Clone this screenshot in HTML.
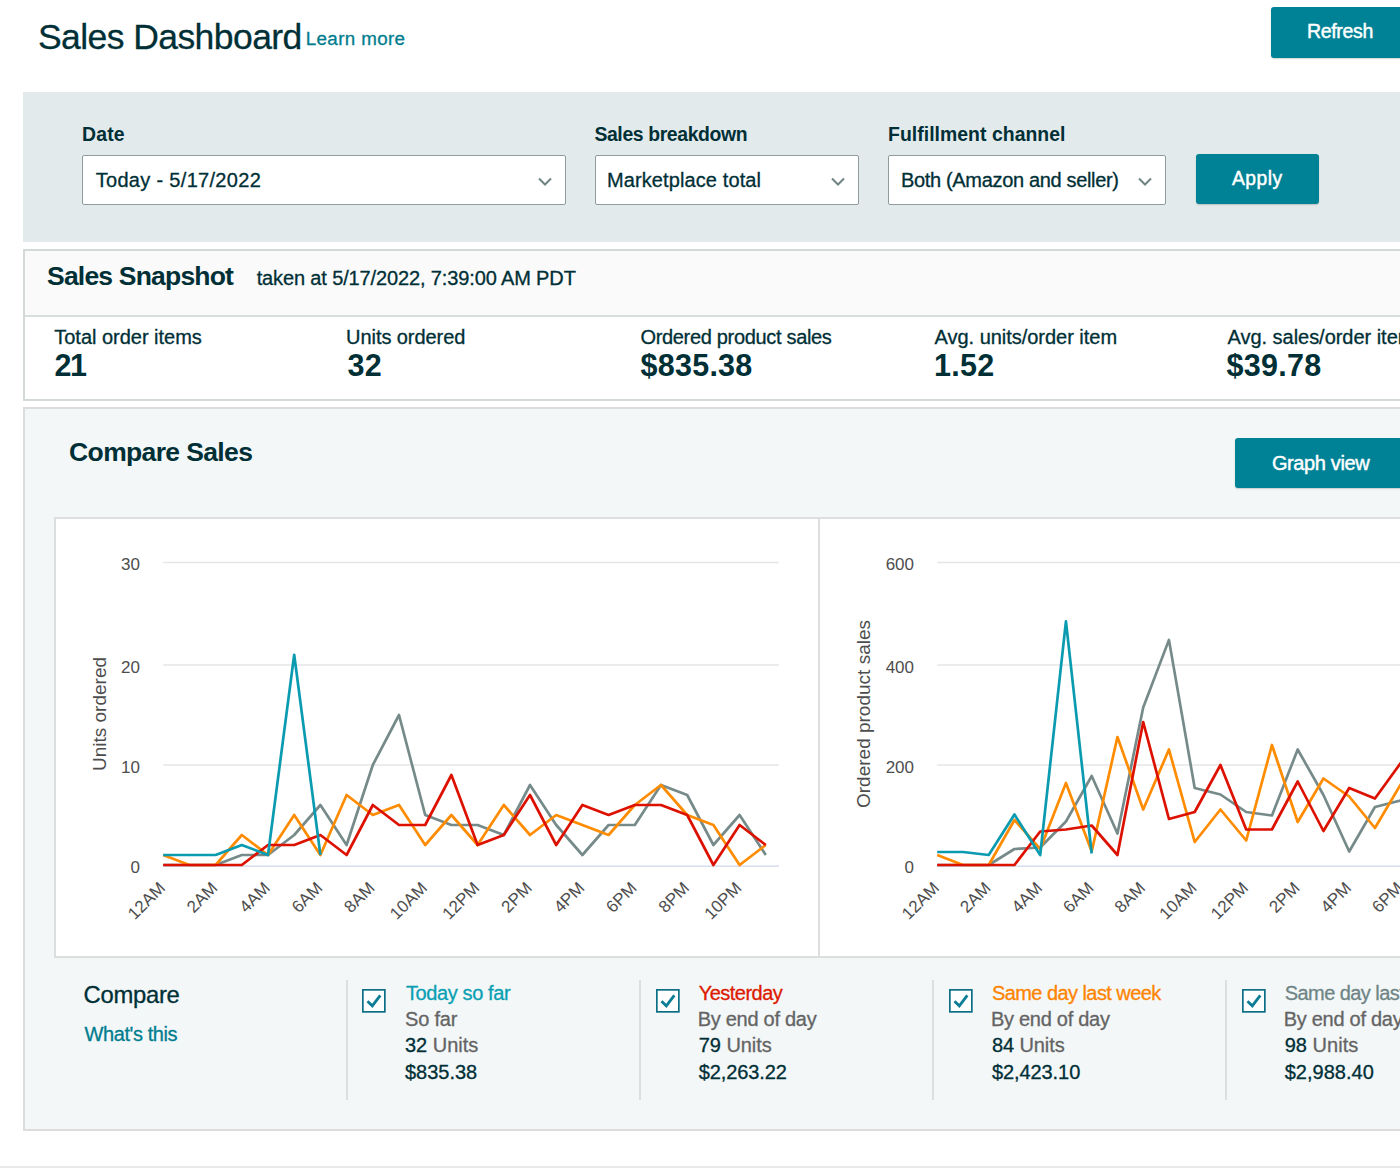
<!DOCTYPE html>
<html><head><meta charset="utf-8">
<style>
*{box-sizing:border-box;margin:0;padding:0}
html,body{width:1400px;height:1168px;overflow:hidden;background:#fff}
body{position:relative;font-family:"Liberation Sans",sans-serif;color:#002f36}
.a{position:absolute}
.t{position:absolute;white-space:nowrap;}
.t.r{-webkit-text-stroke:0.3px currentColor}
.t.wt{-webkit-text-stroke:0.45px currentColor}
.btn{position:absolute;background:#008296;border-radius:3px;box-shadow:0 1px 1.5px rgba(0,0,0,.18)}
.sel{position:absolute;top:155px;height:50px;background:#fff;border:1px solid #8f9c9d;border-radius:2px}
.chev{position:absolute;top:177px;width:14px;height:9px}
.ax{font-family:"Liberation Sans",sans-serif;font-size:17px;fill:#4d4d4d}
.ti{font-family:"Liberation Sans",sans-serif;font-size:19px;fill:#4d4d4d}
</style></head><body>
<!-- header -->
<div class="btn" style="left:1271px;top:7px;width:160px;height:51px"></div>
<!-- filter panel -->
<div class="a" style="left:23px;top:92px;width:1400px;height:150px;background:#e3eaec"></div>
<div class="sel" style="left:82px;width:484px"></div>
<div class="sel" style="left:595px;width:264px"></div>
<div class="sel" style="left:888px;width:278px"></div>
<svg class="chev" style="left:537.8px" viewBox="0 0 14 9"><path d="M1 1.5 L7 7.5 L13 1.5" fill="none" stroke="#6f8383" stroke-width="2"/></svg>
<svg class="chev" style="left:830.8px" viewBox="0 0 14 9"><path d="M1 1.5 L7 7.5 L13 1.5" fill="none" stroke="#6f8383" stroke-width="2"/></svg>
<svg class="chev" style="left:1137.5px" viewBox="0 0 14 9"><path d="M1 1.5 L7 7.5 L13 1.5" fill="none" stroke="#6f8383" stroke-width="2"/></svg>
<div class="btn" style="left:1196px;top:154px;width:123px;height:50px"></div>
<!-- snapshot -->
<div class="a" style="left:23px;top:249px;width:1400px;height:152px;border:2px solid #d3d9d9;background:#fff"></div>
<div class="a" style="left:25px;top:251px;width:1400px;height:66px;background:#fafafa;border-bottom:2px solid #d8dede"></div>
<!-- compare -->
<div class="a" style="left:23px;top:407px;width:1400px;height:724px;border:2px solid #dcdcdb;background:#f3f7f8"></div>
<div class="btn" style="left:1235px;top:438px;width:200px;height:50px"></div>
<div class="a" style="left:54px;top:517px;width:1400px;height:441px;border:2px solid #dddede;background:#fff"></div>
<div class="a" style="left:818px;top:518px;width:2px;height:439px;background:#dddede"></div>
<div class="a" style="left:0;top:1166px;width:1400px;height:2px;background:#e8eaea"></div>
<svg class="a" style="left:0;top:0" width="1400" height="1168">
<line x1="163.2" y1="562.5" x2="779" y2="562.5" stroke="#e6e6e6" stroke-width="1.3"/>
<line x1="163.2" y1="665" x2="779" y2="665" stroke="#e6e6e6" stroke-width="1.3"/>
<line x1="163.2" y1="765" x2="779" y2="765" stroke="#e6e6e6" stroke-width="1.3"/>
<line x1="163.2" y1="866.2" x2="779" y2="866.2" stroke="#ccd6eb" stroke-width="1.3"/>
<text x="140" y="872.7" text-anchor="end" class="ax">0</text>
<text x="140" y="772.7" text-anchor="end" class="ax">10</text>
<text x="140" y="672.7" text-anchor="end" class="ax">20</text>
<text x="140" y="570.2" text-anchor="end" class="ax">30</text>
<text x="0" y="0" transform="translate(106 714) rotate(-90)" text-anchor="middle" class="ti">Units ordered</text>
<text x="0" y="0" transform="translate(166.2 889) rotate(-45)" text-anchor="end" class="ax">12AM</text>
<text x="0" y="0" transform="translate(218.6 889) rotate(-45)" text-anchor="end" class="ax">2AM</text>
<text x="0" y="0" transform="translate(271 889) rotate(-45)" text-anchor="end" class="ax">4AM</text>
<text x="0" y="0" transform="translate(323.4 889) rotate(-45)" text-anchor="end" class="ax">6AM</text>
<text x="0" y="0" transform="translate(375.8 889) rotate(-45)" text-anchor="end" class="ax">8AM</text>
<text x="0" y="0" transform="translate(428.2 889) rotate(-45)" text-anchor="end" class="ax">10AM</text>
<text x="0" y="0" transform="translate(480.6 889) rotate(-45)" text-anchor="end" class="ax">12PM</text>
<text x="0" y="0" transform="translate(533 889) rotate(-45)" text-anchor="end" class="ax">2PM</text>
<text x="0" y="0" transform="translate(585.4 889) rotate(-45)" text-anchor="end" class="ax">4PM</text>
<text x="0" y="0" transform="translate(637.8 889) rotate(-45)" text-anchor="end" class="ax">6PM</text>
<text x="0" y="0" transform="translate(690.2 889) rotate(-45)" text-anchor="end" class="ax">8PM</text>
<text x="0" y="0" transform="translate(742.6 889) rotate(-45)" text-anchor="end" class="ax">10PM</text>
<polyline points="163.2,865 189.4,865 215.6,865 241.8,855 268,855 294.2,835 320.4,805 346.6,845 372.8,765 399,715 425.2,815 451.4,825 477.6,825 503.8,835 530,785 556.2,825 582.4,855 608.6,825 634.8,825 661,785 687.2,795 713.4,845 739.6,815 765.8,855" fill="none" stroke="#778a8a" stroke-width="2.7" stroke-linejoin="round"/>
<polyline points="163.2,855 189.4,865 215.6,865 241.8,835 268,855 294.2,815 320.4,855 346.6,795 372.8,815 399,805 425.2,845 451.4,815 477.6,845 503.8,805 530,835 556.2,815 582.4,825 608.6,835 634.8,805 661,785 687.2,815 713.4,825 739.6,865 765.8,845" fill="none" stroke="#ff8c00" stroke-width="2.7" stroke-linejoin="round"/>
<polyline points="163.2,865 189.4,865 215.6,865 241.8,865 268,845 294.2,845 320.4,835 346.6,855 372.8,805 399,825 425.2,825 451.4,775 477.6,845 503.8,835 530,795 556.2,845 582.4,805 608.6,815 634.8,805 661,805 687.2,815 713.4,865 739.6,825 765.8,845" fill="none" stroke="#dd1100" stroke-width="2.7" stroke-linejoin="round"/>
<polyline points="163.2,855 189.4,855 215.6,855 241.8,845 268,855 294.2,654.75 320.4,855" fill="none" stroke="#0a9bb0" stroke-width="2.7" stroke-linejoin="round"/>
<line x1="937.2" y1="562.5" x2="1420" y2="562.5" stroke="#e6e6e6" stroke-width="1.3"/>
<line x1="937.2" y1="665" x2="1420" y2="665" stroke="#e6e6e6" stroke-width="1.3"/>
<line x1="937.2" y1="765" x2="1420" y2="765" stroke="#e6e6e6" stroke-width="1.3"/>
<line x1="937.2" y1="866.2" x2="1420" y2="866.2" stroke="#ccd6eb" stroke-width="1.3"/>
<text x="914" y="872.7" text-anchor="end" class="ax">0</text>
<text x="914" y="772.7" text-anchor="end" class="ax">200</text>
<text x="914" y="672.7" text-anchor="end" class="ax">400</text>
<text x="914" y="570.2" text-anchor="end" class="ax">600</text>
<text x="0" y="0" transform="translate(870 714) rotate(-90)" text-anchor="middle" class="ti">Ordered product sales</text>
<text x="0" y="0" transform="translate(940.2 889) rotate(-45)" text-anchor="end" class="ax">12AM</text>
<text x="0" y="0" transform="translate(991.7 889) rotate(-45)" text-anchor="end" class="ax">2AM</text>
<text x="0" y="0" transform="translate(1043.2 889) rotate(-45)" text-anchor="end" class="ax">4AM</text>
<text x="0" y="0" transform="translate(1094.7 889) rotate(-45)" text-anchor="end" class="ax">6AM</text>
<text x="0" y="0" transform="translate(1146.2 889) rotate(-45)" text-anchor="end" class="ax">8AM</text>
<text x="0" y="0" transform="translate(1197.7 889) rotate(-45)" text-anchor="end" class="ax">10AM</text>
<text x="0" y="0" transform="translate(1249.2 889) rotate(-45)" text-anchor="end" class="ax">12PM</text>
<text x="0" y="0" transform="translate(1300.7 889) rotate(-45)" text-anchor="end" class="ax">2PM</text>
<text x="0" y="0" transform="translate(1352.2 889) rotate(-45)" text-anchor="end" class="ax">4PM</text>
<text x="0" y="0" transform="translate(1403.7 889) rotate(-45)" text-anchor="end" class="ax">6PM</text>
<text x="0" y="0" transform="translate(1455.2 889) rotate(-45)" text-anchor="end" class="ax">8PM</text>
<text x="0" y="0" transform="translate(1506.7 889) rotate(-45)" text-anchor="end" class="ax">10PM</text>
<polyline points="937.2,865 962.95,865 988.7,865 1014.45,849 1040.2,847.5 1065.95,821.5 1091.7,776 1117.45,833.5 1143.2,707.5 1168.95,639.89 1194.7,788 1220.45,794.5 1246.2,812 1271.95,815.5 1297.7,749.5 1323.45,795 1349.2,851.5 1374.95,807 1400.7,800.5 1426.45,785" fill="none" stroke="#778a8a" stroke-width="2.7" stroke-linejoin="round"/>
<polyline points="937.2,855 962.95,865 988.7,865 1014.45,820 1040.2,849 1065.95,783 1091.7,851.5 1117.45,737 1143.2,809.5 1168.95,749.5 1194.7,842 1220.45,809.5 1246.2,840.5 1271.95,745 1297.7,822 1323.45,778.5 1349.2,796.5 1374.95,828 1400.7,784.5 1426.45,750" fill="none" stroke="#ff8c00" stroke-width="2.7" stroke-linejoin="round"/>
<polyline points="937.2,865 962.95,865 988.7,865 1014.45,865 1040.2,831.5 1065.95,829.5 1091.7,825.5 1117.45,855 1143.2,722 1168.95,819 1194.7,812 1220.45,765 1246.2,829.5 1271.95,829.5 1297.7,781.5 1323.45,831 1349.2,788 1374.95,798.5 1400.7,763 1426.45,805" fill="none" stroke="#dd1100" stroke-width="2.7" stroke-linejoin="round"/>
<polyline points="937.2,852 962.95,852 988.7,855 1014.45,814.5 1040.2,855 1065.95,621.44 1091.7,853.5" fill="none" stroke="#0a9bb0" stroke-width="2.7" stroke-linejoin="round"/>
</svg>
<div class="a" style="left:346px;top:980px;width:2px;height:120px;background:#dcdfdf"></div>
<svg class="a" style="left:362.0px;top:988.8px" width="24" height="24" viewBox="0 0 24 24"><rect x="0.85" y="0.85" width="22" height="22" fill="#fff" stroke="#0b6f87" stroke-width="1.7"/><polyline points="5.5,12.3 10.3,16.8 18.3,6.3" fill="none" stroke="#0b7d95" stroke-width="2.8"/></svg>
<div class="a" style="left:639px;top:980px;width:2px;height:120px;background:#dcdfdf"></div>
<svg class="a" style="left:655.5px;top:988.8px" width="24" height="24" viewBox="0 0 24 24"><rect x="0.85" y="0.85" width="22" height="22" fill="#fff" stroke="#0b6f87" stroke-width="1.7"/><polyline points="5.5,12.3 10.3,16.8 18.3,6.3" fill="none" stroke="#0b7d95" stroke-width="2.8"/></svg>
<div class="a" style="left:932px;top:980px;width:2px;height:120px;background:#dcdfdf"></div>
<svg class="a" style="left:948.5px;top:988.8px" width="24" height="24" viewBox="0 0 24 24"><rect x="0.85" y="0.85" width="22" height="22" fill="#fff" stroke="#0b6f87" stroke-width="1.7"/><polyline points="5.5,12.3 10.3,16.8 18.3,6.3" fill="none" stroke="#0b7d95" stroke-width="2.8"/></svg>
<div class="a" style="left:1225px;top:980px;width:2px;height:120px;background:#dcdfdf"></div>
<svg class="a" style="left:1241.5px;top:988.8px" width="24" height="24" viewBox="0 0 24 24"><rect x="0.85" y="0.85" width="22" height="22" fill="#fff" stroke="#0b6f87" stroke-width="1.7"/><polyline points="5.5,12.3 10.3,16.8 18.3,6.3" fill="none" stroke="#0b7d95" stroke-width="2.8"/></svg>
<div class="t r" style="left:37.90px;top:19.55px;font-size:35.5px;line-height:35.5px;font-weight:400;color:#002f36;letter-spacing:-0.564px">Sales Dashboard</div>
<div class="t r" style="left:305.75px;top:30.19px;font-size:18.8px;line-height:18.8px;font-weight:400;color:#007d8f;letter-spacing:0.361px">Learn more</div>
<div class="t wt" style="left:1306.90px;top:22.19px;font-size:19.5px;line-height:19.5px;font-weight:400;color:#ffffff;letter-spacing:-0.300px">Refresh</div>
<div class="t" style="left:82.00px;top:124.88px;font-size:19.4px;line-height:19.4px;font-weight:700;color:#002f36;letter-spacing:0.200px">Date</div>
<div class="t" style="left:594.40px;top:124.88px;font-size:19.4px;line-height:19.4px;font-weight:700;color:#002f36;letter-spacing:-0.371px">Sales breakdown</div>
<div class="t" style="left:888.00px;top:125.08px;font-size:19.4px;line-height:19.4px;font-weight:700;color:#002f36;letter-spacing:0.044px">Fulfillment channel</div>
<div class="t r" style="left:95.70px;top:169.97px;font-size:20px;line-height:20px;font-weight:400;color:#002f36;letter-spacing:0.312px">Today - 5/17/2022</div>
<div class="t r" style="left:606.90px;top:169.97px;font-size:20px;line-height:20px;font-weight:400;color:#002f36;letter-spacing:0.113px">Marketplace total</div>
<div class="t r" style="left:901.00px;top:169.97px;font-size:20px;line-height:20px;font-weight:400;color:#002f36;letter-spacing:-0.335px">Both (Amazon and seller)</div>
<div class="t wt" style="left:1232.00px;top:168.66px;font-size:19.3px;line-height:19.3px;font-weight:400;color:#ffffff;letter-spacing:0.500px">Apply</div>
<div class="t" style="left:47.00px;top:263.47px;font-size:26.5px;line-height:26.5px;font-weight:700;color:#002f36;letter-spacing:-0.800px">Sales Snapshot</div>
<div class="t r" style="left:256.70px;top:268.07px;font-size:20px;line-height:20px;font-weight:400;color:#002f36;letter-spacing:-0.133px">taken at 5/17/2022, 7:39:00 AM PDT</div>
<div class="t r" style="left:54.25px;top:326.67px;font-size:20px;line-height:20px;font-weight:400;color:#002f36;letter-spacing:-0.016px">Total order items</div>
<div class="t r" style="left:346.10px;top:326.67px;font-size:20px;line-height:20px;font-weight:400;color:#002f36;letter-spacing:-0.067px">Units ordered</div>
<div class="t r" style="left:640.40px;top:326.67px;font-size:20px;line-height:20px;font-weight:400;color:#002f36;letter-spacing:-0.320px">Ordered product sales</div>
<div class="t r" style="left:934.60px;top:326.67px;font-size:20px;line-height:20px;font-weight:400;color:#002f36;letter-spacing:-0.030px">Avg. units/order item</div>
<div class="t r" style="left:1227.50px;top:326.67px;font-size:20px;line-height:20px;font-weight:400;color:#002f36;letter-spacing:-0.030px">Avg. sales/order item</div>
<div class="t" style="left:54.50px;top:349.93px;font-size:30.5px;line-height:30.5px;font-weight:700;color:#002f36;letter-spacing:-1.500px">21</div>
<div class="t" style="left:347.60px;top:349.93px;font-size:30.5px;line-height:30.5px;font-weight:700;color:#002f36;letter-spacing:0.100px">32</div>
<div class="t" style="left:640.60px;top:349.93px;font-size:30.5px;line-height:30.5px;font-weight:700;color:#002f36;letter-spacing:0.233px">$835.38</div>
<div class="t" style="left:934.00px;top:349.93px;font-size:30.5px;line-height:30.5px;font-weight:700;color:#002f36;letter-spacing:0.300px">1.52</div>
<div class="t" style="left:1226.50px;top:349.93px;font-size:30.5px;line-height:30.5px;font-weight:700;color:#002f36;letter-spacing:0.300px">$39.78</div>
<div class="t" style="left:69.10px;top:439.47px;font-size:26.5px;line-height:26.5px;font-weight:700;color:#002f36;letter-spacing:-0.642px">Compare Sales</div>
<div class="t wt" style="left:1271.90px;top:452.77px;font-size:20px;line-height:20px;font-weight:400;color:#ffffff;letter-spacing:-0.378px">Graph view</div>
<div class="t r" style="left:83.60px;top:983.35px;font-size:23.8px;line-height:23.8px;font-weight:400;color:#002f36;letter-spacing:-0.283px">Compare</div>
<div class="t r" style="left:84.60px;top:1024.07px;font-size:20px;line-height:20px;font-weight:400;color:#007d8f;letter-spacing:-0.420px">What's this</div>
<div class="t r" style="left:406.00px;top:982.82px;font-size:20px;line-height:20px;font-weight:400;color:#0a9fb3;letter-spacing:-0.391px">Today so far</div>
<div class="t r" style="left:405.00px;top:1008.87px;font-size:20px;line-height:20px;font-weight:400;color:#646464;letter-spacing:-0.180px">So far</div>
<div class="t r" style="left:405.00px;top:1035.37px;font-size:20px;line-height:20px;font-weight:400;color:#002f36;letter-spacing:-0.014px">32 <span style="color:#646464">Units</span></div>
<div class="t r" style="left:405.00px;top:1061.77px;font-size:20px;line-height:20px;font-weight:400;color:#002f36;letter-spacing:-0.017px">$835.38</div>
<div class="t r" style="left:698.70px;top:982.82px;font-size:20px;line-height:20px;font-weight:400;color:#dd1a00;letter-spacing:-0.513px">Yesterday</div>
<div class="t r" style="left:697.70px;top:1008.87px;font-size:20px;line-height:20px;font-weight:400;color:#646464;letter-spacing:-0.275px">By end of day</div>
<div class="t r" style="left:698.70px;top:1035.37px;font-size:20px;line-height:20px;font-weight:400;color:#002f36;letter-spacing:-0.043px">79 <span style="color:#646464">Units</span></div>
<div class="t r" style="left:698.70px;top:1061.77px;font-size:20px;line-height:20px;font-weight:400;color:#002f36;letter-spacing:-0.088px">$2,263.22</div>
<div class="t r" style="left:991.90px;top:982.82px;font-size:20px;line-height:20px;font-weight:400;color:#ff8400;letter-spacing:-0.559px">Same day last week</div>
<div class="t r" style="left:990.90px;top:1008.87px;font-size:20px;line-height:20px;font-weight:400;color:#646464;letter-spacing:-0.275px">By end of day</div>
<div class="t r" style="left:991.90px;top:1035.37px;font-size:20px;line-height:20px;font-weight:400;color:#002f36;letter-spacing:-0.086px">84 <span style="color:#646464">Units</span></div>
<div class="t r" style="left:991.90px;top:1061.77px;font-size:20px;line-height:20px;font-weight:400;color:#002f36;letter-spacing:-0.075px">$2,423.10</div>
<div class="t r" style="left:1284.70px;top:982.82px;font-size:20px;line-height:20px;font-weight:400;color:#6f8585;letter-spacing:-0.559px">Same day last year</div>
<div class="t r" style="left:1283.70px;top:1008.87px;font-size:20px;line-height:20px;font-weight:400;color:#646464;letter-spacing:-0.275px">By end of day</div>
<div class="t r" style="left:1284.70px;top:1035.37px;font-size:20px;line-height:20px;font-weight:400;color:#002f36;letter-spacing:0.029px">98 <span style="color:#646464">Units</span></div>
<div class="t r" style="left:1284.70px;top:1061.77px;font-size:20px;line-height:20px;font-weight:400;color:#002f36;letter-spacing:0.025px">$2,988.40</div>
</body></html>
